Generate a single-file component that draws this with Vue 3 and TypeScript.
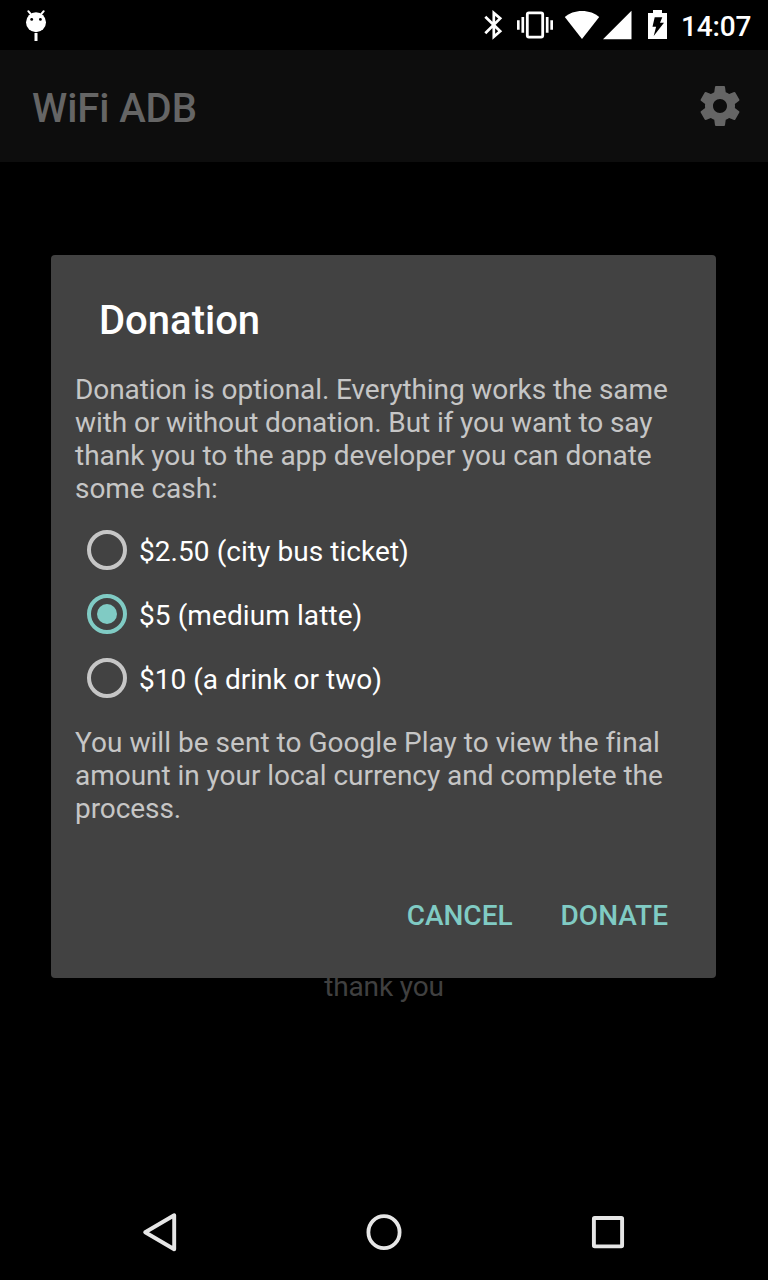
<script setup lang="ts">
import { ref } from 'vue'

interface Line {
  text: string
  spacing: number
}

interface Option extends Line {
  id: string
}

const intro: Line[] = [
  { text: 'Donation is optional. Everything works the same', spacing: -0.09 },
  { text: 'with or without donation. But if you want to say', spacing: -0.1 },
  { text: 'thank you to the app developer you can donate', spacing: -0.035 },
  { text: 'some cash:', spacing: -0.05 },
]
const outro: Line[] = [
  { text: 'You will be sent to Google Play to view the final', spacing: 0.03 },
  { text: 'amount in your local currency and complete the', spacing: -0.04 },
  { text: 'process.', spacing: -0.08 },
]
const options: Option[] = [
  { id: 'ticket', text: '$2.50 (city bus ticket)', spacing: 0.06 },
  { id: 'latte', text: '$5 (medium latte)', spacing: 0.09 },
  { id: 'drink', text: '$10 (a drink or two)', spacing: 0 },
]
const selected = ref('latte')
</script>

<template>
  <div class="screen">
    <div class="status">
      <svg class="debug" width="24" height="34" viewBox="0 0 24 34">
        <path d="M4.300 3.200 6.800 6.200M19.700 3.200 17.200 6.200" stroke="#fff" stroke-width="2" stroke-linecap="round" />
        <circle cx="12" cy="14.300" r="10" fill="#fff" />
        <circle cx="7.700" cy="11.400" r="1.400" />
        <circle cx="16.400" cy="11.400" r="1.400" />
        <path d="M10.500 25h3v8h-3z" fill="#fff" />
      </svg>
      <div class="tray">
        <svg width="20" height="32" viewBox="484 9 20 32">
          <path d="M485.300 16.700 500.200 31.200 493.800 36.700V13L500.200 18.400 485.300 33.300" fill="none" stroke="#fff" stroke-width="2.700" stroke-linejoin="miter" stroke-miterlimit="3" />
        </svg>
        <svg class="vibrate" width="36" height="32" viewBox="517 9 36 32">
          <rect x="527.300" y="12.800" width="15.400" height="24.400" rx="1.600" fill="none" stroke="#fff" stroke-width="2.800" />
          <path d="M518.300 20.300v9.400M551.700 20.300v9.400M522.800 17v15.700M547.200 17v15.700" stroke="#fff" stroke-width="2.700" />
        </svg>
        <svg class="wifi" width="36" height="32" viewBox="564 9 36 32">
          <path d="M582 39 564.800 17C569 13.300 575.200 11 582 11s13 2.300 17.200 6z" fill="#fff" />
        </svg>
        <svg class="signal" width="30" height="32" viewBox="603 9 30 32">
          <path d="M603 39.300 631.500 10.700V39.300z" fill="#fff" />
        </svg>
        <svg class="battery" width="19" height="32" viewBox="648 9 19 32">
          <path d="M653 10h9v3h5v26h-19V13h5z" fill="#fff" />
          <path d="M654.700 17.300h7.600l-2.300 5.400h4L653.700 35.900l2.400-9.200h-3.600z" fill="#000" />
        </svg>
        <span class="clock">14:07</span>
      </div>
    </div>

    <header class="bar">
      <h1>WiFi ADB</h1>
      <svg width="48" height="48" viewBox="0 0 24 24">
        <path fill="#656565" d="M19.430 12.980c.04-.32.07-.64.07-.98s-.03-.66-.07-.98l2.110-1.650c.19-.15.24-.42.12-.64l-2-3.460c-.12-.22-.39-.3-.61-.22l-2.490 1c-.52-.4-1.080-.73-1.690-.98l-.38-2.650C14.460 2.180 14.250 2 14 2h-4c-.25 0-.46.18-.49.42l-.38 2.650c-.61.25-1.170.59-1.690.98l-2.490-1c-.23-.09-.49 0-.61.22l-2 3.460c-.13.22-.07.49.12.64l2.110 1.650c-.04.32-.07.65-.07.98s.03.66.07.98l-2.110 1.650c-.19.15-.24.42-.12.64l2 3.460c.12.22.39.3.61.22l2.490-1c.52.4 1.080.73 1.690.98l.38 2.650c.03.24.24.42.49.42h4c.25 0 .46-.18.49-.42l.38-2.650c.61-.25 1.170-.59 1.690-.98l2.490 1c.23.09.49 0 .61-.22l2-3.460c.12-.22.07-.49-.12-.64zM12 15.500c-1.930 0-3.500-1.570-3.500-3.500s1.570-3.500 3.500-3.500 3.500 1.570 3.500 3.500-1.570 3.500-3.500 3.500z" />
      </svg>
    </header>

    <main class="content">
      <p>thank you</p>
    </main>

    <nav class="nav">
      <svg width="48" height="48" viewBox="136 1208 48 48">
        <path d="M174.200 1215.300v34L145.200 1232.300z" fill="none" stroke="#e6e6e6" stroke-width="3.900" stroke-linejoin="round" />
      </svg>
      <svg width="48" height="48" viewBox="360 1208 48 48">
        <ellipse cx="384" cy="1232.200" rx="15.600" ry="16" fill="none" stroke="#e6e6e6" stroke-width="3.800" />
      </svg>
      <svg width="48" height="48" viewBox="584 1208 48 48">
        <rect x="593.900" y="1218" width="28.200" height="28.400" rx="0.800" fill="none" stroke="#e6e6e6" stroke-width="3.900" stroke-linejoin="round" />
      </svg>
    </nav>

    <section class="dialog" role="dialog">
      <h2>Donation</h2>
      <p class="text">
        <span v-for="l in intro" :key="l.text" class="line" :style="{ letterSpacing: l.spacing + 'px' }">{{ l.text }}</span>
      </p>
      <div class="options">
        <div
          v-for="o in options"
          :key="o.id"
          class="option"
          :class="{ on: o.id === selected }"
          @click="selected = o.id"
        >
          <span class="radio"><i v-if="o.id === selected" class="dot"></i></span>
          <span class="label" :style="{ letterSpacing: o.spacing + 'px' }">{{ o.text }}</span>
        </div>
      </div>
      <p class="text">
        <span v-for="l in outro" :key="l.text" class="line" :style="{ letterSpacing: l.spacing + 'px' }">{{ l.text }}</span>
      </p>
      <div class="actions">
        <button type="button">CANCEL</button>
        <button type="button">DONATE</button>
      </div>
    </section>
  </div>
</template>

<style>
body {
  margin: 0;
  background: #000;
}
</style>

<style scoped>
.screen {
  position: relative;
  display: flex;
  flex-direction: column;
  width: 768px;
  height: 1280px;
  overflow: hidden;
  background: #000;
  color: #fff;
  font-family: Roboto, sans-serif;
  font-size: 28px;
  line-height: 33px;
  font-variant-ligatures: common-ligatures;
}
svg {
  display: block;
  flex: none;
}
h1,
h2,
p {
  margin: 0;
}
.status {
  display: flex;
  justify-content: space-between;
  height: 50px;
  padding: 0 16px 0 24px;
  flex: none;
}
.debug {
  margin-top: 8px;
}
.tray {
  display: flex;
  align-items: center;
  height: 50px;
}
.vibrate {
  margin-left: 13px;
}
.wifi {
  margin-left: 11px;
}
.signal {
  margin-left: 3px;
}
.battery {
  margin-left: 15px;
}
.clock {
  width: 71px;
  margin: 3px 0 0 14px;
  font-weight: 500;
  letter-spacing: -0.15px;
  white-space: nowrap;
}
.bar {
  display: flex;
  align-items: center;
  justify-content: space-between;
  height: 112px;
  padding: 0 24px 0 32px;
  box-sizing: border-box;
  background: #0d0d0d;
  color: #656565;
  flex: none;
}
h1,
h2 {
  font-size: 40px;
  line-height: 48px;
  font-weight: 500;
}
h1 {
  margin-top: 6px;
  letter-spacing: -0.08px;
}
.content {
  flex: 1;
  display: flex;
  justify-content: center;
  padding-top: 808px;
  color: #404040;
  letter-spacing: -0.15px;
}
.nav {
  display: flex;
  justify-content: center;
  align-items: center;
  gap: 176px;
  height: 96px;
  flex: none;
}
.dialog {
  position: absolute;
  left: 51px;
  top: 255px;
  width: 665px;
  height: 723px;
  box-sizing: border-box;
  padding: 42px 24px 0;
  border-radius: 4px;
  background: #424242;
}
h2 {
  padding-left: 24px;
}
.text {
  color: #c6c6c6;
  white-space: nowrap;
}
.line {
  display: block;
}
h2 + .text {
  margin-top: 28px;
}
.options {
  margin: 13px 0 16px;
}
.option {
  display: flex;
  align-items: center;
  height: 64px;
  padding-left: 12px;
}
.radio {
  display: flex;
  align-items: center;
  justify-content: center;
  width: 40px;
  height: 40px;
  box-sizing: border-box;
  border: 4px solid #c6c6c6;
  border-radius: 50%;
}
.on .radio {
  border-color: #80cbc4;
}
.dot {
  width: 20px;
  height: 20px;
  border-radius: 50%;
  background: #80cbc4;
}
.label {
  margin: 3px 0 0 12px;
}
.actions {
  display: flex;
  justify-content: flex-end;
  gap: 48px;
  margin-top: 74px;
  padding-right: 24px;
}
button {
  padding: 0;
  border: 0;
  background: none;
  color: #80cbc4;
  font: 500 28px/33px Roboto, sans-serif;
}
</style>
